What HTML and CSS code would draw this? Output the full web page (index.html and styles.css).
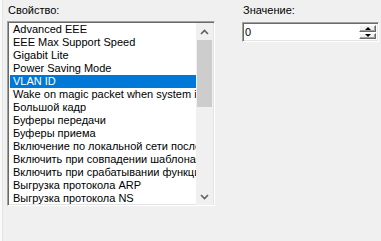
FILE: index.html
```html
<!DOCTYPE html>
<html lang="ru">
<head>
    <meta charset="UTF-8">
    <title>Свойства</title>
    <link rel="stylesheet" href="styles.css">
</head>
<body>
    <div class="page">
        <div class="col-prop">
            <div class="label">Свойство:</div>
            <div class="listbox">
                <div class="items">
                    <div class="item">Advanced EEE</div>
                    <div class="item">EEE Max Support Speed</div>
                    <div class="item">Gigabit Lite</div>
                    <div class="item">Power Saving Mode</div>
                    <div class="item selected">VLAN ID</div>
                    <div class="item">Wake on magic packet when system is in the S0ix power state</div>
                    <div class="item">Большой кадр</div>
                    <div class="item">Буферы передачи</div>
                    <div class="item">Буферы приема</div>
                    <div class="item">Включение по локальной сети после отключения</div>
                    <div class="item">Включить при совпадении шаблона</div>
                    <div class="item">Включить при срабатывании функции Magic Packet</div>
                    <div class="item">Выгрузка протокола ARP</div>
                    <div class="item">Выгрузка протокола NS</div>
                </div>
                <div class="scrollbar">
                    <div class="sb-btn">
                        <svg width="9" height="6" viewBox="0 0 9 6"><path d="M1 5 L4.5 1.5 L8 5" fill="none" stroke="#606060" stroke-width="1.6"/></svg>
                    </div>
                    <div class="sb-track">
                        <div class="sb-thumb"></div>
                    </div>
                    <div class="sb-btn">
                        <svg width="9" height="6" viewBox="0 0 9 6"><path d="M1 1 L4.5 4.5 L8 1" fill="none" stroke="#606060" stroke-width="1.6"/></svg>
                    </div>
                </div>
            </div>
        </div>
        <div class="col-value">
            <div class="label">Значение:</div>
            <div class="spinbox">
                <div class="spin-text">0</div>
                <div class="spin-btns">
                    <div class="spin-btn"><span class="tri-up"></span></div>
                    <div class="spin-btn"><span class="tri-down"></span></div>
                </div>
            </div>
        </div>
    </div>
</body>
</html>
```

FILE: styles.css
```css
* {
    margin: 0;
    padding: 0;
    box-sizing: border-box;
}
body {
    background: #f0f0f0;
    font-family: "Liberation Sans", Arial, sans-serif;
    font-size: 11px;
    color: #000;
    width: 381px;
    height: 241px;
    overflow: hidden;
    border-left: 2px solid #fafafa;
    box-shadow: inset 1px 0 0 #e3e3e3;
}
.page {
    display: flex;
    padding: 3px 0 0 5px;
}
.label {
    height: 18px;
    line-height: 14px;
    padding-left: 1px;
    color: #000;
}
.col-prop {
    width: 208px;
}
.col-value {
    margin-left: 27px;
    width: 137px;
}
.col-value .label {
    height: 19px;
}
.listbox {
    display: flex;
    height: 185px;
    border-top: 1px solid #a0a0a0;
    border-left: 1px solid #a0a0a0;
    border-right: 1px solid #fff;
    border-bottom: 1px solid #fff;
    box-shadow: inset 1px 1px 0 #696969, inset -1px -1px 0 #e3e3e3;
    background: #fff;
    padding: 1px 1px 0 2px;
    overflow: hidden;
}
.items {
    flex: 1;
    overflow: hidden;
}
.item {
    height: 13px;
    line-height: 12px;
    padding-left: 3px;
    white-space: nowrap;
    overflow: hidden;
}
.item.selected {
    background: #0078d7;
    color: #fff;
}
.scrollbar {
    width: 17px;
    display: flex;
    flex-direction: column;
    background: #f0f0f0;
}
.sb-btn {
    height: 17px;
    display: flex;
    align-items: center;
    justify-content: center;
}
.sb-track {
    flex: 1;
}
.sb-thumb {
    height: 67px;
    margin: 0 1px;
    background: #cdcdcd;
}
.spinbox {
    display: flex;
    height: 20px;
    background: #fff;
    border-top: 1px solid #a0a0a0;
    border-left: 1px solid #a0a0a0;
    border-right: 1px solid #fff;
    border-bottom: 1px solid #fff;
    box-shadow: inset 1px 1px 0 #696969, inset -1px -1px 0 #e3e3e3;
    padding: 2px;
}
.spin-text {
    flex: 1;
    line-height: 15px;
}
.spin-btns {
    width: 17px;
    display: flex;
    flex-direction: column;
    gap: 1px;
}
.spin-btn {
    flex: 1;
    background: #f0f0f0;
    border-top: 1px solid #fff;
    border-left: 1px solid #fff;
    border-right: 1px solid #696969;
    border-bottom: 1px solid #696969;
    box-shadow: inset -1px -1px 0 #a0a0a0;
    display: flex;
    align-items: center;
    justify-content: center;
}
.tri-up {
    width: 0;
    height: 0;
    border-left: 3px solid transparent;
    border-right: 3px solid transparent;
    border-bottom: 3px solid #000;
}
.tri-down {
    width: 0;
    height: 0;
    border-left: 3px solid transparent;
    border-right: 3px solid transparent;
    border-top: 3px solid #000;
}
```
